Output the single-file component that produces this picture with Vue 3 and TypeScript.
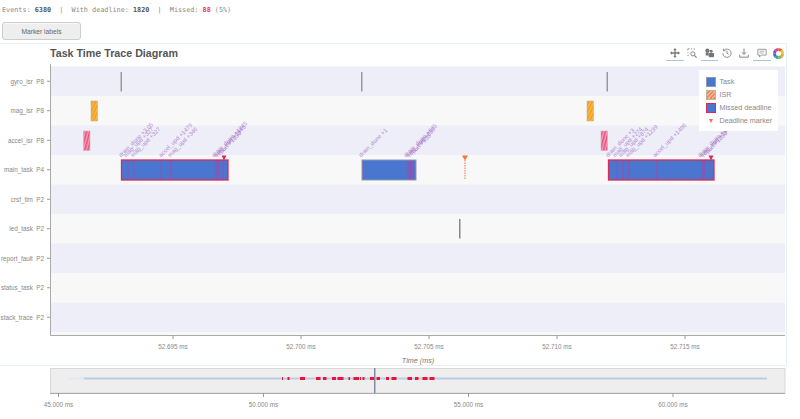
<template>
  <div class="page">
    <div class="stats">Events: <b>6380</b>&nbsp;&nbsp;|&nbsp;&nbsp;With deadline: <b>1820</b>&nbsp;&nbsp;|&nbsp;&nbsp;Missed: <b class="miss">88</b> (5%)</div>
    <button class="marker-btn">Marker labels</button>

    <div class="card">
      <div class="title-row">
        <div class="title">Task Time Trace Diagram</div>
        <div class="toolbar">
          <span class="tool on">
            <svg width="10" height="10" viewBox="0 0 12 12"><path d="M6 0 8 2.5H6.800V5.200H9.500V4L12 6 9.500 8V6.800H6.800V9.500H8L6 12 4 9.500H5.200V6.800H2.500V8L0 6 2.500 4V5.200H5.200V2.500H4Z" fill="#777" /></svg>
          </span>
          <span class="tool">
            <svg width="10" height="10" viewBox="0 0 12 12" fill="none" stroke="#888"><path d="M1 3V1H3M5 1H6M8 1H9V2M1 5V6M1 8V9H2" /><circle cx="7" cy="7" r="2.500" stroke-width="1.200" /><path d="M9 9 11.500 11.500" stroke-width="1.400" /></svg>
          </span>
          <span class="tool on">
            <svg width="11" height="10" viewBox="0 0 12 12" fill="#777"><circle cx="3.500" cy="3" r="2.500" /><circle cx="8" cy="4" r="1.800" /><rect x="5" y="6" width="6.500" height="5" rx="1" /><path d="M1.500 5H5V9H1.500Z" /></svg>
          </span>
          <span class="tool">
            <svg width="10" height="10" viewBox="0 0 12 12" fill="none" stroke="#888" stroke-width="1.100"><path d="M2.200 3A5 5 0 1 1 1 6.200" /><path d="M1.800 .8V3.300H4.300M6 3.300V6.300L8 7.500" /></svg>
          </span>
          <span class="tool">
            <svg width="10" height="10" viewBox="0 0 12 12" fill="none" stroke="#888" stroke-width="1.200"><path d="M6 .5V7.500M3.300 5 6 7.700 8.700 5M.8 8V11H11.200V8" /></svg>
          </span>
          <span class="tool on">
            <svg width="10" height="10" viewBox="0 0 12 12" fill="none" stroke="#888"><path d="M1 1.500H11V8.500H5L3 10.800V8.500H1Z" /><path d="M3 3.800H9M3 6H8" stroke-width=".8" /></svg>
          </span>
          <svg class="logo" width="11" height="11" viewBox="0 0 12 12">
            <path v-for="s in logoSegments" :key="s.color" :d="s.d" :fill="s.color" />
          </svg>
        </div>
      </div>

      <div class="plot-wrap">
        <svg class="plot" width="787" height="304" viewBox="0 62 787 304">
          <defs>
            <pattern id="hatch-orange" width="3" height="3" patternUnits="userSpaceOnUse" patternTransform="rotate(25)">
              <rect width="3" height="3" fill="#f9b64c" />
              <rect width="1.300" height="3" fill="#f09a1d" />
            </pattern>
            <pattern id="hatch-pink" width="3" height="3" patternUnits="userSpaceOnUse" patternTransform="rotate(15)">
              <rect width="3" height="3" fill="#f5a0b8" />
              <rect width="1.600" height="3" fill="#e8527f" />
            </pattern>
          </defs>

          <rect x="51" y="66.500" width="734" height="268.500" fill="#f8f8f8" />
          <rect
            v-for="(t, i) in tasks"
            v-show="i % 2 === 0"
            :key="'band' + t.name"
            x="51"
            :y="rowTop(i)"
            width="734"
            height="29.500"
            fill="#eeeef8"
          />

          <g v-for="(t, i) in tasks" :key="t.name">
            <text class="axis-text" x="44" :y="rowTop(i) + 17" text-anchor="end">{{ t.name }}&nbsp;&nbsp;{{ t.prio }}</text>
            <path :d="`M47 ${rowTop(i) + 14.750}H50`" stroke="#999" />
          </g>

          <rect v-for="x in gyroTicks" :key="x" :x="x" y="72" width="1.500" height="19.500" fill="#999" />
          <rect x="459" y="219" width="1.500" height="19.500" fill="#888" />

          <rect v-for="x in magBars" :key="x" :x="x" y="101" width="6.500" height="20" fill="url(#hatch-orange)" stroke="#c9b38e" stroke-width=".6" />
          <rect v-for="x in accelBars" :key="x" :x="x" y="131" width="6.500" height="19.500" fill="url(#hatch-pink)" stroke="#d0b0ba" stroke-width=".6" />

          <g v-for="b in mainBars" :key="b.x">
            <rect :x="b.x" y="160" :width="b.w" height="20" fill="#4a76cf" />
            <rect v-for="m in b.marks" :key="m[0]" :x="m[0]" y="160" :width="m[1]" height="20" fill="#8a55b0" opacity=".8" />
            <rect :x="b.x" y="160" :width="b.w" height="20" fill="none" :stroke="b.missed ? '#d92b56' : '#8f9ab0'" :stroke-width="b.missed ? 1.300 : 1" />
          </g>

          <text
            v-for="l in labels"
            :key="l.text + l.x"
            class="mark-label"
            :x="l.x"
            y="157.500"
            :transform="`rotate(-45 ${l.x} 157.500)`"
          >{{ l.text }}</text>

          <path d="M221.500 155.500H226.500L224 160.500Z" fill="#d92b56" />
          <path d="M708.500 155.500H713.500L711 160.500Z" fill="#d92b56" />
          <path d="M462 155.500H468L465 160.500Z" fill="#f4743b" />
          <path d="M465 160V180" stroke="#f4743b" stroke-dasharray="1.500 1" />

          <path d="M50.500 64V335.500H785" fill="none" stroke="#aaa" />
          <g v-for="t in mainTicks" :key="t.label">
            <path :d="`M${t.x} 335V339`" stroke="#999" />
            <text class="axis-text" :x="t.x" y="348.500" text-anchor="middle">{{ t.label }}</text>
          </g>
          <text class="axis-title" x="418" y="362.500" text-anchor="middle">Time (ms)</text>
        </svg>

        <div class="legend">
          <div class="legend-row"><span class="swatch task"></span>Task</div>
          <div class="legend-row"><span class="swatch isr"></span>ISR</div>
          <div class="legend-row"><span class="swatch missed"></span>Missed deadline</div>
          <div class="legend-row"><span class="swatch-tri"></span>Deadline marker</div>
        </div>
      </div>
    </div>

    <svg class="range" width="800" height="52" viewBox="0 367 800 52">
      <rect x="50.500" y="369.500" width="734.500" height="24.500" fill="#eee" stroke="#d8d8d8" />
      <path d="M68 379.500H84" stroke="#e2e7f2" stroke-width="2" />
      <path d="M84 379.500H767" stroke="#bccbe8" stroke-width="2" />
      <rect v-for="s in rangeMisses" :key="s[0]" :x="s[0]" y="378" :width="s[1]" height="3" fill="#ec1339" />
      <rect x="374" y="369" width="1.500" height="25" fill="#8688a8" />
      <path d="M50 394.500H785" stroke="#aaa" />
      <g v-for="t in rangeTicks" :key="t.label">
        <path :d="`M${t.x} 394V398`" stroke="#999" />
        <text class="axis-text" :x="t.x" y="408" text-anchor="middle">{{ t.label }}</text>
      </g>
    </svg>
  </div>
</template>

<script setup lang="ts">
const tasks = [
  { name: 'gyro_isr', prio: 'P8' },
  { name: 'mag_isr', prio: 'P8' },
  { name: 'accel_isr', prio: 'P8' },
  { name: 'main_task', prio: 'P4' },
  { name: 'crsf_tlm', prio: 'P2' },
  { name: 'led_task', prio: 'P2' },
  { name: 'report_fault', prio: 'P2' },
  { name: 'status_task', prio: 'P2' },
  { name: 'stack_trace', prio: 'P2' },
]

const rowTop = (i: number) => 66.5 + i * 29.5

const gyroTicks = [120.5, 361, 606.5]
const magBars = [91, 587]
const accelBars = [83.5, 601]

const mainBars = [
  { x: 121.5, w: 106.5, missed: true, marks: [[127, 1.5], [133, 1.5], [160.5, 1.5], [170, 1.5], [215.5, 4.5], [222.5, 1.2]] },
  { x: 362, w: 54, missed: false, marks: [[362, 1.5], [407.5, 6]] },
  { x: 608.5, w: 105.5, missed: true, marks: [[616.5, 1.5], [622, 1.5], [628, 1.5], [656, 1.5], [701, 4.5], [709, 1.2]] },
]

const labels = [
  { x: 121, text: 'drain_done +3.05' },
  { x: 126, text: 'mag_upd +327' },
  { x: 133, text: 'mag_upd +327' },
  { x: 161, text: 'accel_upd +1479' },
  { x: 170, text: 'mag_upd +346' },
  { x: 214, text: 'drain_done +1845' },
  { x: 216, text: 'mag_upd +1845' },
  { x: 218, text: 'report +1850' },
  { x: 361, text: 'drain_done +1' },
  { x: 406, text: 'drain_done +845' },
  { x: 408, text: 'mag_upd +850' },
  { x: 410, text: 'report +855' },
  { x: 608, text: 'drain_done +3' },
  { x: 615, text: 'mag_upd +274' },
  { x: 621, text: 'mag_upd +874' },
  { x: 628, text: 'mag_upd +1239' },
  { x: 655, text: 'accel_upd +1496' },
  { x: 700, text: 'drain_done +1840' },
  { x: 702, text: 'mag_upd +1845' },
  { x: 704, text: 'report +1850' },
]

const mainTicks = [
  { x: 173, label: '52.695 ms' },
  { x: 301, label: '52.700 ms' },
  { x: 429, label: '52.705 ms' },
  { x: 557, label: '52.710 ms' },
  { x: 685, label: '52.715 ms' },
]

const rangeTicks = [
  { x: 58.5, label: '45.000 ms' },
  { x: 263.5, label: '50.000 ms' },
  { x: 468.5, label: '55.000 ms' },
  { x: 673, label: '60.000 ms' },
]

const rangeMisses = [
  [282, 1], [287.5, 2], [300, 5], [316, 4.5], [323, 3.5], [332, 4], [337.5, 6], [348.5, 1.5],
  [353.5, 5.5], [360, 1], [362.5, 2], [370, 4.5], [376.5, 3.5], [386, 3], [391.5, 5],
  [407.5, 4.5], [415, 3.5], [422.5, 5], [429.5, 5],
]

// bokeh style colour ring
const logoColors = ['#e8a33d', '#7fc241', '#35a89a', '#3b6fc9', '#8a4fb8', '#e0457a', '#e8603a', '#f2c230']
const logoSegments = logoColors.map((color, i) => {
  const a0 = (i / logoColors.length) * Math.PI * 2
  const a1 = ((i + 1) / logoColors.length) * Math.PI * 2
  const pt = (r: number, a: number) => `${(6 + r * Math.cos(a)).toFixed(2)} ${(6 + r * Math.sin(a)).toFixed(2)}`
  return {
    color,
    d: `M${pt(6, a0)}A6 6 0 0 1 ${pt(6, a1)}L${pt(2.8, a1)}A2.8 2.8 0 0 0 ${pt(2.8, a0)}Z`,
  }
})
</script>

<style scoped>
.page {
  width: 800px;
  height: 419px;
  overflow: hidden;
  background: #fff;
  font-family: "Liberation Sans", Arial, sans-serif;
}

.stats {
  height: 22px;
  padding-left: 2px;
  line-height: 20px;
  font-family: "DejaVu Sans Mono", monospace;
  font-size: 6.800px;
  color: #888;
  white-space: nowrap;
}

.stats b {
  color: #555;
}

.stats .miss {
  color: #e0395c;
}

.marker-btn {
  display: block;
  width: 79px;
  height: 18px;
  margin: 0 0 3px 2px;
  padding: 0;
  background: #eee;
  border: 1px solid #ccc;
  border-radius: 3px;
  box-shadow: inset 0 1px 1px #f8f8f8;
  font-family: inherit;
  font-size: 6.700px;
  color: #666;
}

.card {
  width: 787px;
  height: 323px;
  box-sizing: border-box;
  border-top: 1px solid #e6eef6;
  border-right: 1px solid #e6eef6;
  border-bottom: 1px solid #e6eef6;
}

.title-row {
  display: flex;
  align-items: center;
  justify-content: space-between;
  height: 18px;
  padding: 0 2px 0 50px;
}

.title {
  font-size: 10.700px;
  font-weight: 700;
  color: #555;
  white-space: nowrap;
}

.toolbar {
  display: flex;
  align-items: center;
}

.tool {
  display: flex;
  align-items: center;
  justify-content: center;
  width: 17.400px;
  height: 16px;
  box-sizing: border-box;
  border-bottom: 1px solid transparent;
}

.tool.on {
  border-bottom-color: #a9c6dd;
}

.logo {
  margin-left: 2.500px;
}

.plot-wrap {
  position: relative;
}

.plot {
  display: block;
}

.axis-text {
  font-family: "Liberation Sans", Arial, sans-serif;
  font-size: 6.300px;
  fill: #888;
}

.axis-title {
  font-family: "Liberation Sans", Arial, sans-serif;
  font-size: 7.200px;
  font-style: italic;
  fill: #777;
}

.mark-label {
  font-family: "Liberation Sans", Arial, sans-serif;
  font-size: 5.900px;
  fill: #9458bd;
  opacity: 0.65;
}

.legend {
  position: absolute;
  top: 8px;
  left: 699px;
  width: 79px;
  height: 61px;
  box-sizing: border-box;
  padding: 5px 0 0 7px;
  background: #fff;
  font-size: 7.200px;
  color: #888;
}

.legend-row {
  display: flex;
  align-items: center;
  gap: 3.500px;
  height: 13px;
  white-space: nowrap;
}

.swatch {
  flex: none;
  width: 10px;
  height: 10px;
  box-sizing: border-box;
}

.swatch.task {
  background: #4a76cf;
  border: 1px solid #8f9ab0;
}

.swatch.isr {
  background: repeating-linear-gradient(-50deg, #e9895f 0 1.500px, #f2b394 1.500px 3px);
  border: 1px solid #c9b38e;
}

.swatch.missed {
  background: #4a76cf;
  border: 1.500px solid #d92b56;
}

.swatch-tri {
  flex: none;
  width: 0;
  height: 0;
  margin: 0 3px;
  border-left: 2.500px solid transparent;
  border-right: 2.500px solid transparent;
  border-top: 4.500px solid #f4743b;
}

.range {
  display: block;
}
</style>
